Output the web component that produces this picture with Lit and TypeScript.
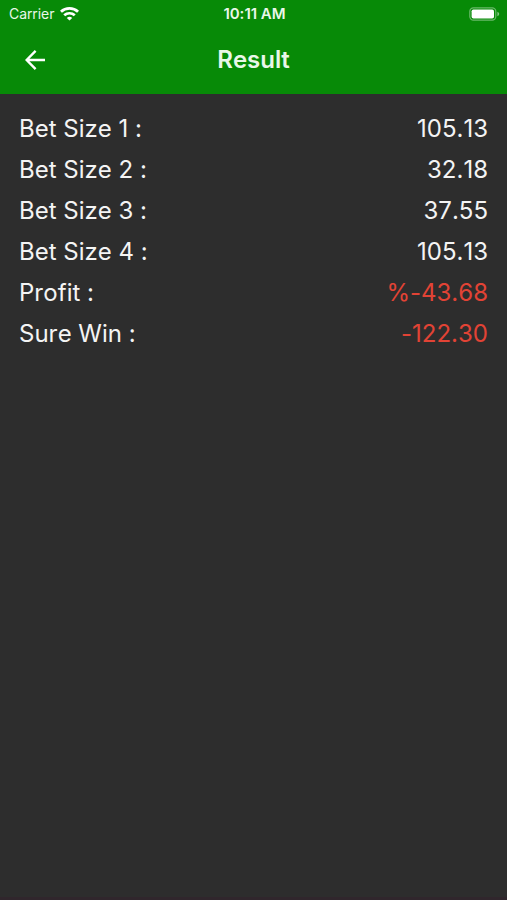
import { LitElement, html, css } from "lit";
import { customElement, state } from "lit/decorators.js";
import { classMap } from "lit/directives/class-map.js";

interface ResultRow {
  label: string;
  value: string;
  negative?: boolean;
}

@customElement("status-bar")
class StatusBar extends LitElement {
  static styles = css`
    :host {
      display: grid;
      grid-template-columns: 1fr auto 1fr;
      align-items: center;
      height: 28px;
      padding: 0 7px 0 9px;
      font-size: 14px;
      line-height: 20px;
      color: #e9f7e9;
    }
    .carrier {
      display: flex;
      align-items: center;
      gap: 6px;
    }
    .time {
      font-size: 15px;
      font-weight: 600;
    }
    .battery {
      justify-self: end;
    }
    svg {
      display: block;
    }
  `;

  render() {
    return html`
      <div class="carrier">
        <span>Carrier</span>
        <svg width="19" height="14" viewBox="0 0 18 14" fill="none" stroke="#fff" stroke-width="2.6" preserveAspectRatio="none" aria-label="Wi-Fi">
          <path d="M0.9 4.7a11.6 11.6 0 0 1 16.2 0" />
          <path d="M4 8.2a7.2 7.2 0 0 1 10 0" />
          <path d="M9 13.6L6.4 11a3.7 3.7 0 0 1 5.2 0z" fill="#fff" stroke="none" />
        </svg>
      </div>
      <span class="time">10:11 AM</span>
      <svg class="battery" width="31" height="14" viewBox="0 0 31 14" aria-label="Battery full">
        <rect x="0.8" y="0.8" width="26" height="12.4" rx="3.6" fill="none" stroke="#fff" stroke-opacity="0.4" stroke-width="1.2" />
        <rect x="2.6" y="2.4" width="22.4" height="9.2" rx="1.8" fill="#fff" />
        <path d="M28.4 4.8c2.4 1 2.4 3.4 0 4.4z" fill="#fff" fill-opacity="0.5" />
      </svg>
    `;
  }
}

@customElement("app-root")
class AppRoot extends LitElement {
  static styles = css`
    :host {
      display: flex;
      flex-direction: column;
      box-sizing: border-box;
      min-height: 100vh;
      background: #2d2d2d;
      border-bottom: 3px solid #30262c;
      font-family: Inter, "Liberation Sans", sans-serif;
      font-kerning: none;
      font-feature-settings: "calt" 0;
      color: #f4f4f4;
    }
    header {
      padding-bottom: 2px;
      background: #078a07;
    }
    .toolbar {
      display: grid;
      grid-template-columns: 48px 1fr 48px;
      align-items: center;
      height: 64px;
      padding: 0 11px;
    }
    .back {
      display: grid;
      place-items: center;
      width: 48px;
      height: 48px;
      padding: 0;
      border: 0;
      background: none;
      color: #fff;
      cursor: pointer;
    }
    h1 {
      margin: 0;
      font-size: 24px;
      line-height: 32px;
      font-weight: 600;
      text-align: center;
      color: #e9f7e9;
    }
    dl {
      display: flex;
      flex-direction: column;
      gap: 9px;
      margin: 0;
      padding: 19px;
      font-size: 24px;
      line-height: 32px;
    }
    .row {
      display: flex;
      justify-content: space-between;
    }
    dt,
    dd {
      margin: 0;
    }
    .negative {
      color: #e24335;
    }
  `;

  @state() private rows: ResultRow[] = [
    { label: "Bet Size 1 :", value: "105.13" },
    { label: "Bet Size 2 :", value: "32.18" },
    { label: "Bet Size 3 :", value: "37.55" },
    { label: "Bet Size 4 :", value: "105.13" },
    { label: "Profit :", value: "%-43.68", negative: true },
    { label: "Sure Win :", value: "-122.30", negative: true },
  ];

  render() {
    return html`
      <header>
        <status-bar></status-bar>
        <div class="toolbar">
          <button class="back" aria-label="Back">
            <svg width="20" height="20" viewBox="0 0 20 20" fill="none" stroke="currentColor" stroke-width="2.4">
              <path d="M20 10H2M10.6 0.9L1.6 10L10.6 19.1" />
            </svg>
          </button>
          <h1>Result</h1>
        </div>
      </header>
      <main>
        <dl>
          ${this.rows.map(
            (row) => html`
              <div class="row">
                <dt>${row.label}</dt>
                <dd class=${classMap({ negative: !!row.negative })}>${row.value}</dd>
              </div>
            `,
          )}
        </dl>
      </main>
    `;
  }
}
